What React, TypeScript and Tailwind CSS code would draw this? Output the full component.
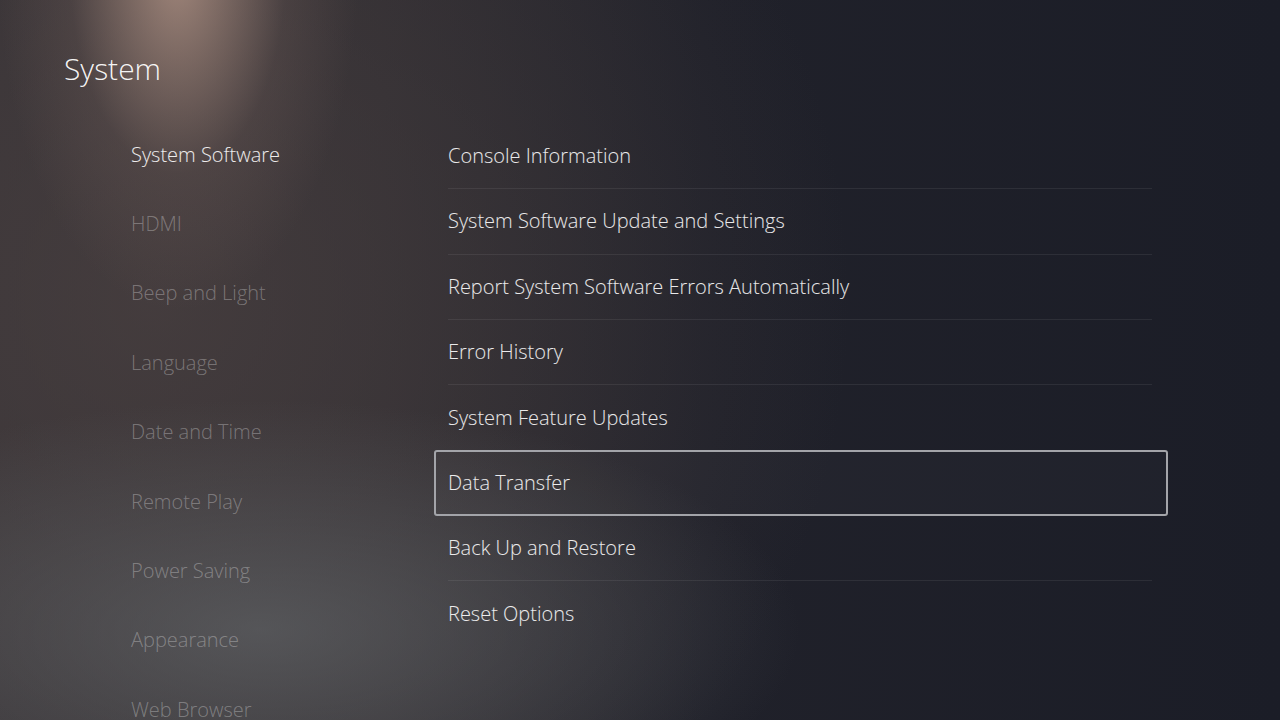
import React from 'react';

const categories = [
  'System Software',
  'HDMI',
  'Beep and Light',
  'Language',
  'Date and Time',
  'Remote Play',
  'Power Saving',
  'Appearance',
  'Web Browser',
];

const options = [
  'Console Information',
  'System Software Update and Settings',
  'Report System Software Errors Automatically',
  'Error History',
  'System Feature Updates',
  'Data Transfer',
  'Back Up and Restore',
  'Reset Options',
];

const FOCUSED = 'Data Transfer';

const App: React.FC = () => {
  return (
    <div
      className="w-[1280px] h-[720px] overflow-hidden text-white bg-[radial-gradient(ellipse_180px_340px_at_178px_-30px,rgba(178,148,134,0.85),rgba(120,100,95,0.25)_60%,transparent),radial-gradient(ellipse_540px_230px_at_260px_630px,rgba(100,103,106,0.65),transparent),radial-gradient(ellipse_700px_700px_at_150px_300px,rgba(76,66,66,0.7),transparent),linear-gradient(90deg,#333034_0%,#2d2b30_30%,#20212a_55%,#1b1d27_100%)]"
      style={{ fontFamily: '"Open Sans", "Noto Sans", sans-serif' }}
    >
      {/* Header */}
      <div className="pl-[64px] pt-[47px] h-[114px]">
        <h1 className="text-[30px] leading-[44px] font-light text-white/95">System</h1>
      </div>

      <div className="flex">
        {/* Category list */}
        <div className="w-[434px] pl-[131px] flex flex-col pt-[6px]">
          {categories.map((c, i) => (
            <div
              key={c}
              className={`h-[69.4px] shrink-0 flex items-center text-[20px] font-light ${
                i === 0 ? 'text-white/90' : 'text-white/30'
              }`}
            >
              {c}
            </div>
          ))}
        </div>

        {/* Options list */}
        <div className="w-[734px] flex flex-col pt-[10px]">
          {options.map((o, i) => {
            const focused = o === FOCUSED;
            const nextFocused = options[i + 1] === FOCUSED;
            const last = i === options.length - 1;
            return (
              <div
                key={o}
                className={`h-[65.3px] flex items-center ${
                  focused
                    ? 'border-2 border-[#a3a4a9] rounded-[3px] bg-white/[0.02] px-[12px]'
                    : 'px-[14px]'
                }`}
              >
                <div
                  className={`w-full h-full flex items-center text-[20px] font-light text-white/90 ${
                    !focused && !nextFocused && !last ? 'border-b border-white/[0.07] mr-[2px]' : ''
                  }`}
                >
                  {o}
                </div>
              </div>
            );
          })}
        </div>
      </div>
    </div>
  );
};

export default App;
